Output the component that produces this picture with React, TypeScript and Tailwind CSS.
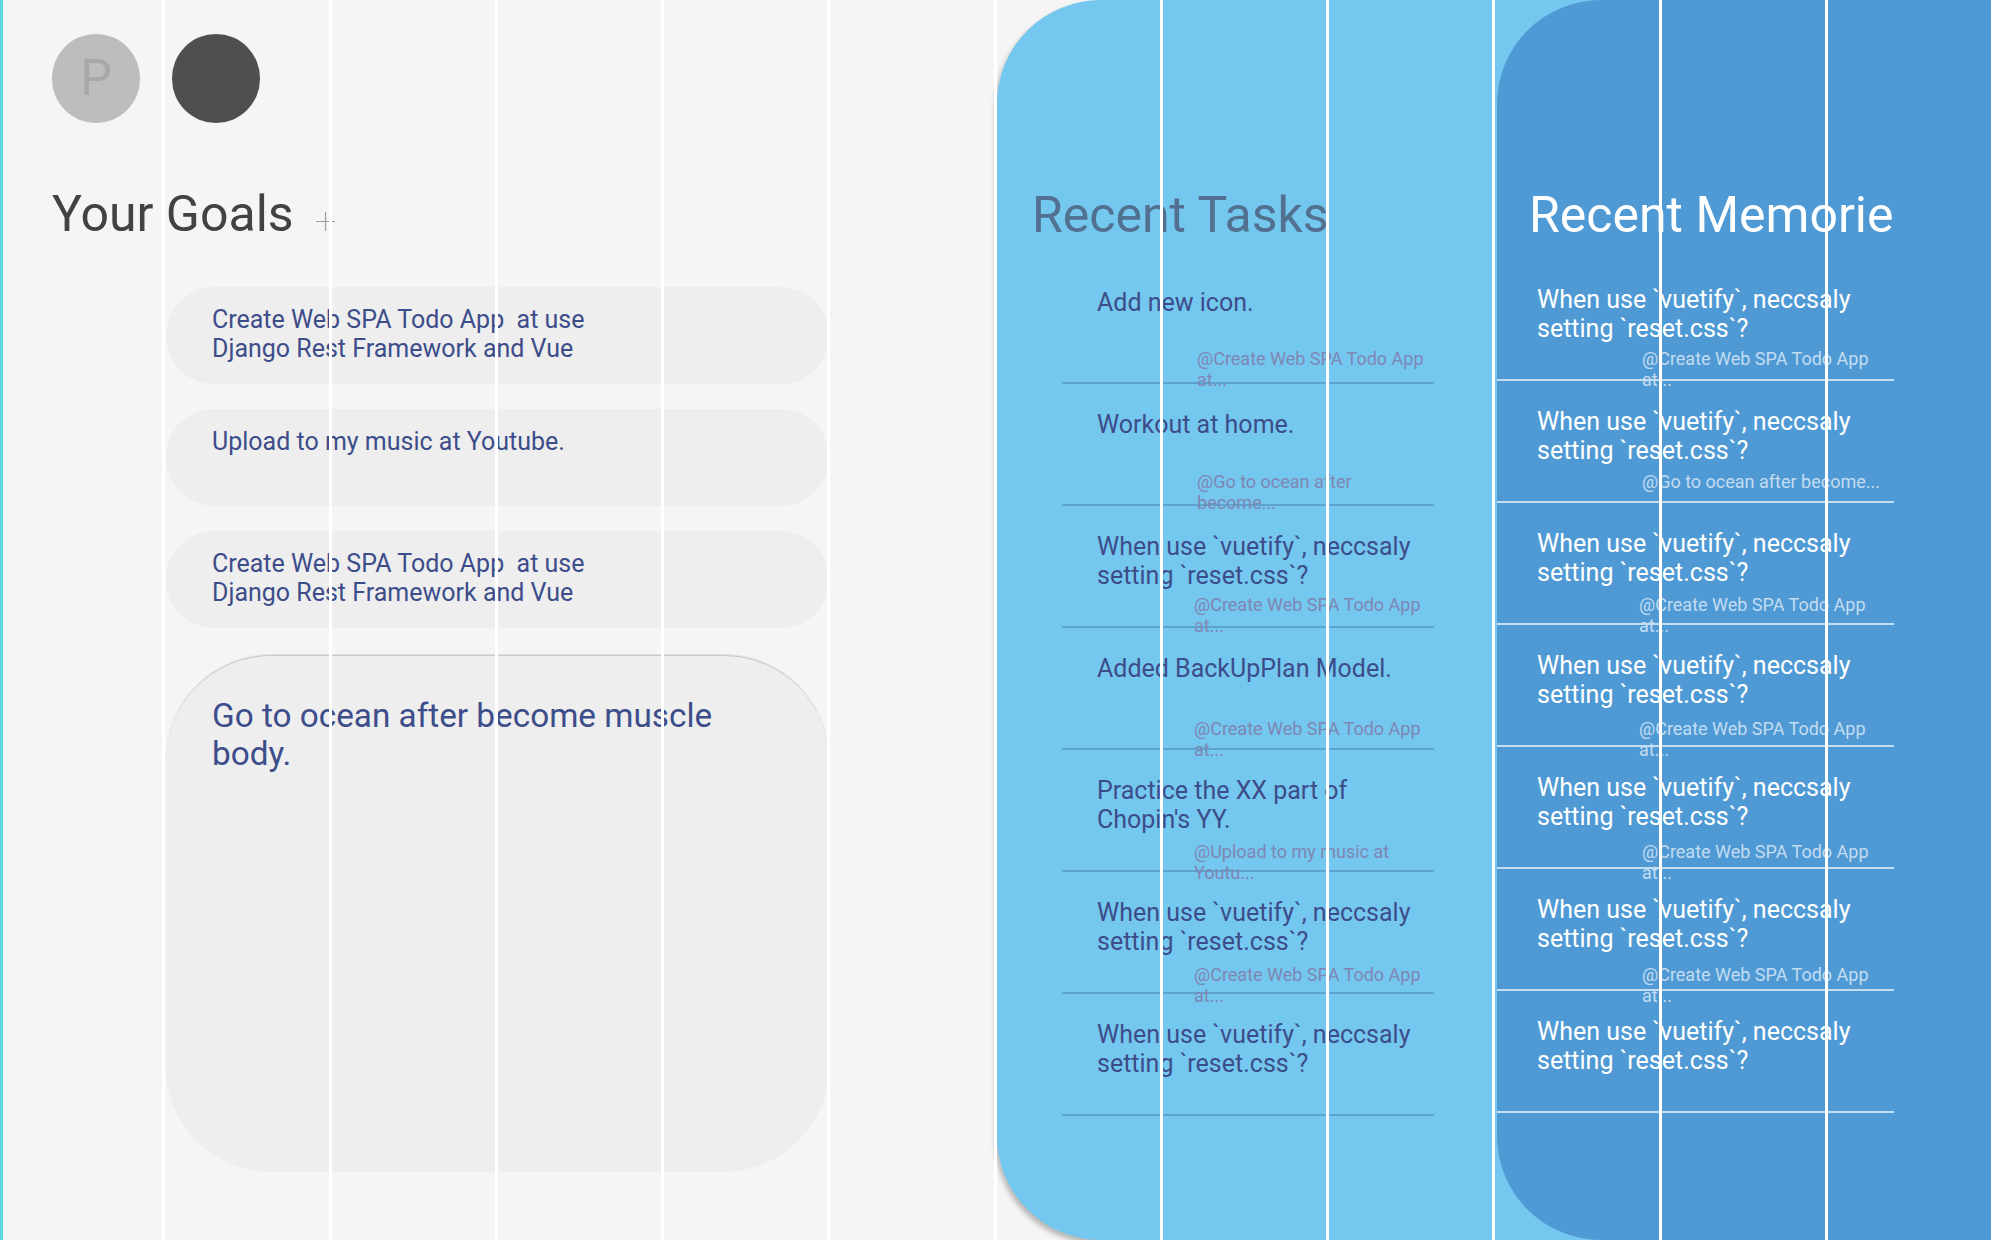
const goals = [
  'Create Web SPA Todo App\u00a0 at use Django Rest Framework and Vue',
  'Upload to my music at Youtube.',
  'Create Web SPA Todo App\u00a0 at use Django Rest Framework and Vue',
]

const vuetify = 'When use `vuetify`, neccsaly setting `reset.css`?'
const webApp = '@Create Web SPA Todo App at...'

// subs drift about 1px per row in the original, so each row has its own offset
const tasks = [
  { title: 'Add new icon.', sub: webApp, indent: 'pl-[135px] mt-0' },
  { title: 'Workout at home.', sub: '@Go to ocean after become...', indent: 'pl-[135px] mt-[1px]' },
  { title: vuetify, sub: webApp, indent: 'pl-[132px] mt-[2px]' },
  { title: 'Added BackUpPlan Model.', sub: webApp, indent: 'pl-[132px] mt-[4px]' },
  { title: "Practice the XX part of Chopin's YY.", sub: '@Upload to my music at Youtu...', indent: 'pl-[132px] mt-[5px]' },
  { title: vuetify, sub: webApp, indent: 'pl-[132px] mt-[6px]' },
  { title: vuetify, sub: '', indent: 'pl-[132px]' },
]

const memories = [
  { sub: webApp, indent: 'pl-[145px] mt-0' },
  { sub: '@Go to ocean after become...', indent: 'pl-[145px] mt-[1px]' },
  { sub: webApp, indent: 'pl-[142px] mt-[2px]' },
  { sub: webApp, indent: 'pl-[142px] mt-[4px]' },
  { sub: webApp, indent: 'pl-[145px] mt-[5px]' },
  { sub: webApp, indent: 'pl-[145px] mt-[6px]' },
  { sub: '', indent: 'pl-[145px]' },
]

function GridLines() {
  return (
    <div className="pointer-events-none absolute inset-y-0 -left-px grid w-[1995px] grid-cols-12">
      {Array.from({ length: 12 }).map((_, i) => (
        <div key={i} className={`border-r-[3px] border-white ${i === 0 ? 'border-l-4 border-l-[#5fd8e0]' : ''}`} />
      ))}
    </div>
  )
}

export default function App() {
  return (
    <div className="relative flex h-[1240px] w-[1992px] overflow-hidden bg-[#f5f5f5] font-['Roboto',sans-serif]">
      <section className="w-[997px] shrink-0 pl-[52px]">
        <div className="flex gap-[32px] pt-[34px]">
          <div className="flex h-[89px] w-[88px] items-center justify-center rounded-full bg-[#bdbdbd] text-[50px] text-[#a8a8a8]">P</div>
          <div className="h-[89px] w-[88px] rounded-full bg-[#4f4f4f]" />
        </div>
        <div className="mt-[59px] flex h-[64px] items-center">
          <h2 className="text-[50px] leading-[64px] text-[#424242]">Your Goals</h2>
          <svg className="ml-[22px] mt-[14px] text-[#9e9e9e]" width="19" height="19" viewBox="0 0 19 19" fill="none" stroke="currentColor" strokeWidth="1.2">
            <path d="M0 9.5h19M9.5 0v19" />
          </svg>
        </div>
        <div className="ml-[114px] mt-[41px] flex w-[663px] flex-col gap-[25px]">
          {goals.map((goal, i) => (
            <div key={i} className="h-[97px] rounded-[48px] bg-[#eeeeee] py-[18px] pl-[46px] pr-[190px] text-[25px] leading-[29px] text-[#3c4d8a]">
              {goal}
            </div>
          ))}
          <div className="mt-[3px] h-[516px] rounded-[105px] bg-[#eeeeee] pl-[46px] pr-[100px] pt-[41px] text-[33.3px] leading-[38px] text-[#3c4d8a] shadow-[0_-2px_2px_-1px_rgba(0,0,0,0.25)]">
            Go to ocean after become muscle body.
          </div>
        </div>
      </section>

      <div className="flex flex-1 rounded-l-[104px] bg-[#74c7ee] shadow-[-2px_4px_5px_rgba(0,0,0,0.25)]">
        <section className="w-[500px] shrink-0 pt-[183px]">
          <h2 className="pl-[35px] text-[50px] leading-[64px] text-[#52708f]">Recent Tasks</h2>
          <ul className="ml-[65px] mt-[15px] w-[372px]">
            {tasks.map((task, i) => (
              <li key={i} className="h-[122px] border-b-2 border-[#5ca3cf] pt-[26px]">
                <div className="ml-[35px] h-[61px] pr-[20px] text-[25px] leading-[29px] text-[#3c4d8a]">{task.title}</div>
                <div className={`text-[18px] leading-[20.5px] text-[#7f86b4] ${task.indent}`}>{task.sub}</div>
              </li>
            ))}
          </ul>
        </section>

        <section className="flex-1 rounded-l-[104px] bg-[#4f9ad4] pt-[183px]">
          <h2 className="pl-[32px] text-[50px] leading-[64px] text-white">Recent Memorie</h2>
          <ul className="mt-[12px] w-[397px]">
            {memories.map((memory, i) => (
              <li key={i} className="h-[122px] border-b-2 border-[#c5ddf0] pt-[26px]">
                <div className="ml-[40px] h-[64px] w-[330px] text-[25px] leading-[29px] text-white">{vuetify}</div>
                <div className={`pr-[8px] text-[18px] leading-[20.5px] text-[#c3dcf1] ${memory.indent}`}>{memory.sub}</div>
              </li>
            ))}
          </ul>
        </section>
      </div>

      <GridLines />
    </div>
  )
}
